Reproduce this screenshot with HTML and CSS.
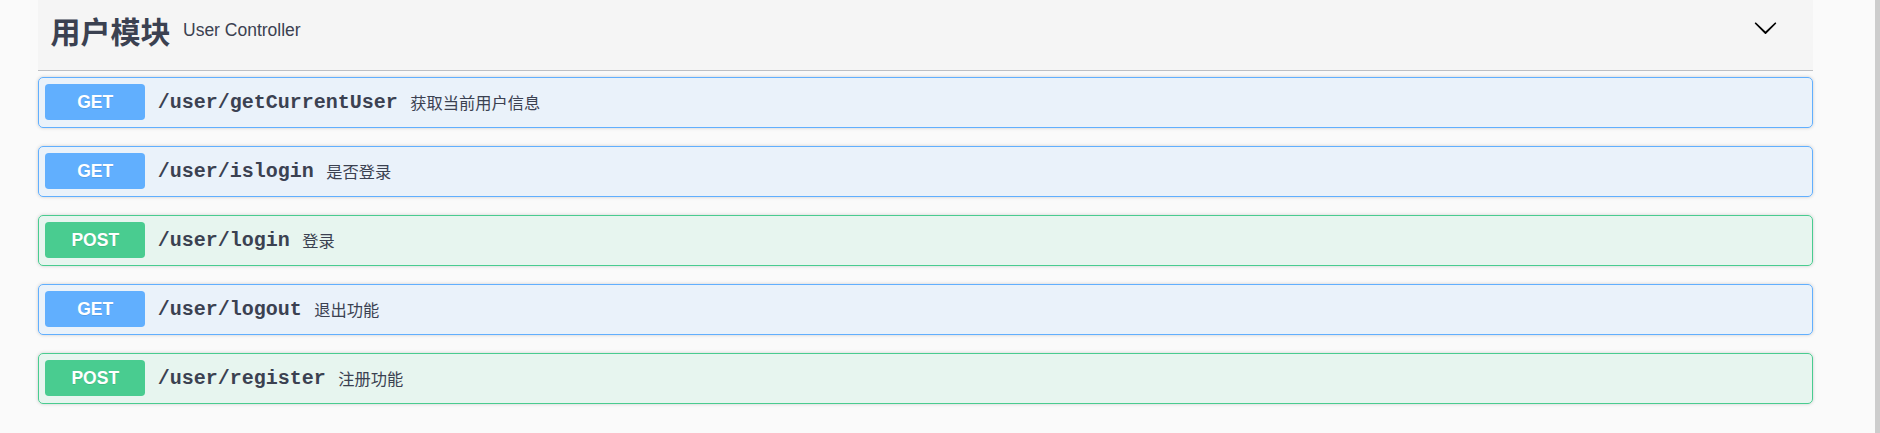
FILE: index.html
```html
<!DOCTYPE html>
<html lang="zh-CN">
<head>
<meta charset="utf-8">
<title>用户模块</title>
<link rel="stylesheet" href="styles.css">
</head>
<body>
<div class="layout">
  <main class="content">
    <div class="tag">
      <h4 class="tag-title">用户模块</h4>
      <small class="tag-desc">User Controller</small>
      <svg class="arrow" width="25" height="25" viewBox="0 0 20 20" aria-hidden="true"><path d="M17.418 6.109c.272-.268.709-.268.979 0s.271.701 0 .969l-7.908 7.83c-.27.268-.707.268-.979 0l-7.908-7.83c-.27-.268-.27-.701 0-.969.271-.268.709-.268.979 0L10 13.25l7.418-7.141z"/></svg>
    </div>
    <div class="opblock get">
      <span class="method">GET</span>
      <span class="path">/user/getCurrentUser</span>
      <span class="desc">获取当前用户信息</span>
    </div>
    <div class="opblock get">
      <span class="method">GET</span>
      <span class="path">/user/islogin</span>
      <span class="desc">是否登录</span>
    </div>
    <div class="opblock post">
      <span class="method">POST</span>
      <span class="path">/user/login</span>
      <span class="desc">登录</span>
    </div>
    <div class="opblock get">
      <span class="method">GET</span>
      <span class="path">/user/logout</span>
      <span class="desc">退出功能</span>
    </div>
    <div class="opblock post">
      <span class="method">POST</span>
      <span class="path">/user/register</span>
      <span class="desc">注册功能</span>
    </div>
  </main>
  <div class="scrollbar"></div>
</div>
</body>
</html>
```

FILE: styles.css
```css
html, body {
  margin: 0;
  padding: 0;
  background: #fafafa;
  height: 100%;
  overflow: hidden;
}
body {
  font-family: "Liberation Sans", Arial, "Noto Sans CJK SC", sans-serif;
  color: #3b4151;
}
.layout {
  display: flex;
  height: 100vh;
}
.content {
  margin-left: 38px;
  width: 1775px;
}
.scrollbar {
  margin-left: auto;
  width: 5px;
  height: 100%;
  background: #cdcdcd;
}
.tag {
  display: flex;
  align-items: center;
  box-sizing: border-box;
  height: 71px;
  padding: 0 35px 10px 12.5px;
  border-bottom: 1px solid rgba(59, 65, 81, 0.3);
  background: rgba(0, 0, 0, 0.018);
  margin-bottom: 6px;
}
.tag-title {
  margin: 0;
  font-family: "Noto Sans CJK SC", sans-serif;
  font-size: 30px;
  line-height: 1;
  font-weight: 700;
  color: #3b4151;
}
.tag-desc {
  flex: 1;
  padding: 0 12.5px;
  font-family: "Liberation Sans", Arial, sans-serif;
  font-size: 17.5px;
  font-weight: 400;
  color: #3b4151;
}
.arrow {
  fill: #000;
  margin-bottom: 5px;
}
.opblock {
  display: flex;
  align-items: center;
  padding: 6.25px;
  margin: 0 0 18.5px;
  border: 1px solid #61affe;
  border-radius: 5px;
  box-shadow: 0 0 3.75px rgba(0, 0, 0, 0.19);
}
.opblock.get {
  background: rgba(97, 175, 254, 0.1);
  border-color: #61affe;
}
.opblock.post {
  background: rgba(73, 204, 144, 0.1);
  border-color: #49cc90;
}
.method {
  min-width: 100px;
  padding: 7.5px 0;
  font-family: "Liberation Sans", Arial, sans-serif;
  font-size: 17.5px;
  line-height: 21px;
  font-weight: 700;
  color: #fff;
  text-align: center;
  border-radius: 3.75px;
  text-shadow: 0 1px 0 rgba(0, 0, 0, 0.1);
}
.get .method { background: #61affe; }
.post .method { background: #49cc90; }
.path {
  padding: 0 12.5px;
  font-family: "Liberation Mono", "Courier New", monospace;
  font-size: 20px;
  font-weight: 700;
  color: #3b4151;
}
.desc {
  flex: 1 1 auto;
  font-family: "Noto Sans CJK SC", sans-serif;
  font-size: 16.25px;
  color: #3b4151;
}
```
